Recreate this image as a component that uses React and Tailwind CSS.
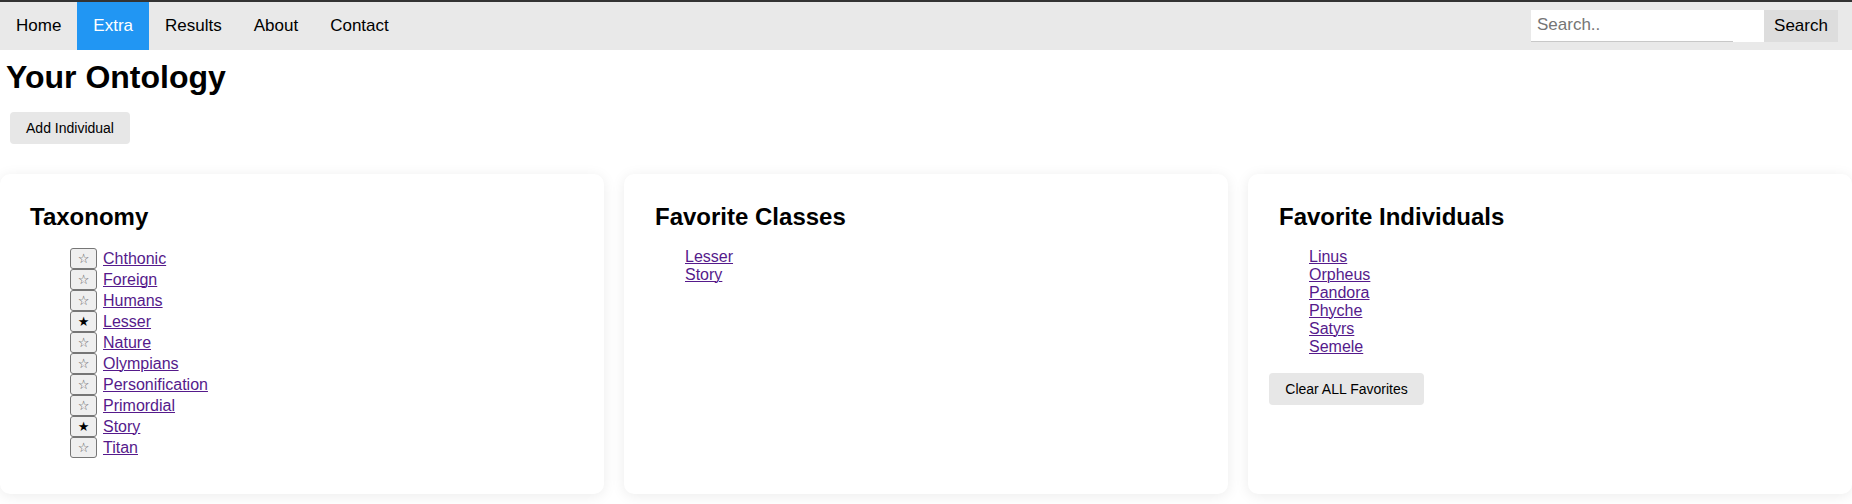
import React from "react";

const taxonomy = [
  ["Chthonic", false],
  ["Foreign", false],
  ["Humans", false],
  ["Lesser", true],
  ["Nature", false],
  ["Olympians", false],
  ["Personification", false],
  ["Primordial", false],
  ["Story", true],
  ["Titan", false],
];

const favClasses = ["Lesser", "Story"];
const favIndividuals = ["Linus", "Orpheus", "Pandora", "Phyche", "Satyrs", "Semele"];

const font = { fontFamily: '"Liberation Sans", Arial, sans-serif' };

function Link({ children }) {
  return (
    <a href="#" className="text-[#551a8b] underline decoration-1 text-[16px]">
      {children}
    </a>
  );
}

export default function App() {
  return (
    <div className="min-h-[504px] bg-white text-black" style={font}>
      <div className="h-[2px] bg-[#333333]" />
      <nav className="h-[48px] bg-[#e9e9e9] flex items-stretch">
        <div className="flex items-stretch text-[17px]">
          <a href="#" className="px-4 flex items-center text-black">Home</a>
          <a href="#" className="px-4 flex items-center bg-[#2196f3] text-white">Extra</a>
          <a href="#" className="px-4 flex items-center text-black">Results</a>
          <a href="#" className="px-4 flex items-center text-black">About</a>
          <a href="#" className="px-4 flex items-center text-black">Contact</a>
        </div>
        <div className="ml-auto mr-[14px] mt-[8px] flex h-[32px]">
          <div className="w-[233px] bg-white flex flex-col justify-between">
            <span className="pl-[6px] pt-[5px] text-[17px] leading-[20px] text-[#757575]">Search..</span>
            <div className="h-px w-[202px] bg-[#c8c8c8]" />
          </div>
          <button className="w-[74px] bg-[#dddddd] text-[17px] text-black flex items-center justify-center">
            Search
          </button>
        </div>
      </nav>

      <h1 className="mt-[9px] ml-[6px] text-[32px] leading-[37px] font-bold">Your Ontology</h1>

      <button className="mt-[16px] ml-[10px] h-[32px] w-[120px] rounded-[4px] bg-[#e7e7e7] text-[14px] text-black">
        Add Individual
      </button>

      <div className="mt-[30px] grid grid-cols-3 gap-[20px]">
        <div className="h-[320px] rounded-[10px] bg-white shadow-[0_2px_14px_rgba(0,0,0,0.08)] pt-[29px] pl-[30px]">
          <h2 className="text-[24px] leading-[28px] font-bold">Taxonomy</h2>
          <ul className="mt-[17px] pl-[40px]">
            {taxonomy.map(([name, fav]) => (
              <li key={name} className="flex items-center h-[21px]">
                <button
                  className={
                    "w-[27px] h-[21px] border border-[#767676] rounded-[3px] bg-[#efefef] flex items-center justify-center text-[13px] leading-none " +
                    (fav ? "text-black" : "text-[#555555]")
                  }
                  style={{ fontFamily: '"DejaVu Sans", sans-serif' }}
                >
                  {fav ? "★" : "☆"}
                </button>
                <span className="ml-[6px] leading-[18px]">
                  <Link>{name}</Link>
                </span>
              </li>
            ))}
          </ul>
        </div>

        <div className="h-[320px] rounded-[10px] bg-white shadow-[0_2px_14px_rgba(0,0,0,0.08)] pt-[29px] pl-[31px]">
          <h2 className="text-[24px] leading-[28px] font-bold">Favorite Classes</h2>
          <ul className="mt-[17px] pl-[30px]">
            {favClasses.map((n) => (
              <li key={n} className="leading-[18px]">
                <Link>{n}</Link>
              </li>
            ))}
          </ul>
        </div>

        <div className="h-[320px] rounded-[10px] bg-white shadow-[0_2px_14px_rgba(0,0,0,0.08)] pt-[29px] pl-[21px]">
          <h2 className="ml-[10px] text-[24px] leading-[28px] font-bold">Favorite Individuals</h2>
          <ul className="mt-[17px] pl-[40px]">
            {favIndividuals.map((n) => (
              <li key={n} className="leading-[18px]">
                <Link>{n}</Link>
              </li>
            ))}
          </ul>
          <button className="mt-[17px] h-[32px] w-[155px] rounded-[4px] bg-[#e7e7e7] text-[14px] text-black">
            Clear ALL Favorites
          </button>
        </div>
      </div>
    </div>
  );
}
